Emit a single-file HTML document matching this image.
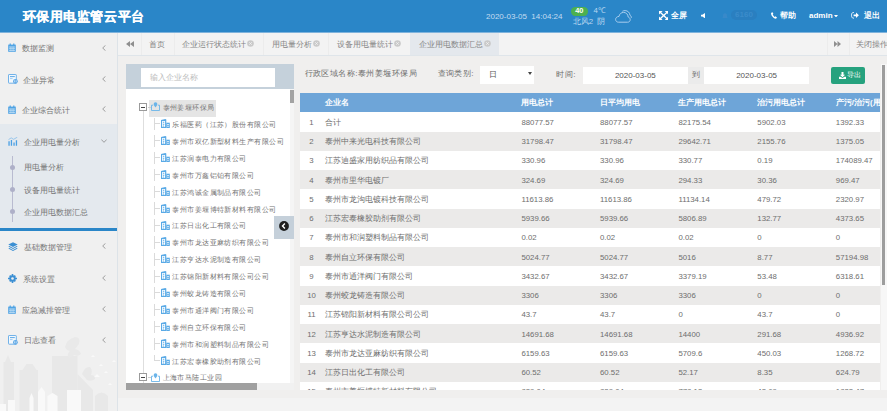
<!DOCTYPE html>
<html><head><meta charset="utf-8">
<style>
*{margin:0;padding:0;box-sizing:border-box}
html,body{width:887px;height:411px;overflow:hidden}
body{position:relative;background:#f0efee;font-family:"Liberation Sans",sans-serif;font-size:7.8px;color:#666}
.a{position:absolute;white-space:nowrap}
#hd{left:0;top:0;width:887px;height:32px;background:#2a86c8}
#title{left:22.5px;top:0.8px;height:32px;line-height:32px;font-size:13px;letter-spacing:0.6px;-webkit-text-stroke:0.2px #fff;font-weight:bold;color:#fff}
.hw{color:#fff;font-weight:bold;font-size:8px}
#sb{left:0;top:33px;width:117px;height:378px;background:#f0f0f0;overflow:hidden}
#sbline{left:117px;top:33px;width:1px;height:378px;background:#dde3e8}
.mi{left:0;width:117px;height:20px;line-height:20px;font-size:7.8px;color:#737373}
.mi .t{position:absolute;left:22px;top:1.5px}
.mi .ch{position:absolute;line-height:0}
.mi .ic{position:absolute;line-height:0}
#act{left:0;top:124px;width:117px;height:104px;background:#e4e9ee}
#bl{left:0;top:228px;width:117px;height:2.6px;background:#2a86c8}
#tb{left:118px;top:33px;width:769px;height:22.5px;background:#f3f3f3;border-bottom:1px solid #dfe5ea}
.sep{top:33px;width:1px;height:22px;background:#ececec}
.tt{top:32.5px;height:23px;line-height:23px;color:#858585}
#tree{left:126px;top:64px;width:168px;height:326px;background:#fff}
#treehd{left:126px;top:64px;width:168px;height:24.6px;background:#c5d1db}
#tinput{left:141px;top:67.6px;width:134px;height:19.4px;background:#fff;color:#bbb;line-height:19.4px;padding-left:9px}
.tn{height:17px;line-height:17px;color:#727272;font-size:7.3px;letter-spacing:0.45px}
#thd{left:300px;top:92.8px;width:580px;height:19.6px;background:#6ea5d8}
.th{top:93.4px;height:19px;line-height:19px;color:#fff;font-weight:bold}
.row{left:300px;width:580px;height:19.25px}
.row.g{background:#ebeae9}
.row.w{background:#fff}
.cell{height:19.3px;line-height:19.3px;color:#6e6e6e;margin-top:0.5px}
.lb{height:19px;line-height:19px;color:#6c6c6c;font-size:8px;letter-spacing:0.45px}
.dt{top:66.5px;height:17.6px;line-height:17.6px;text-align:center;color:#555;font-size:8px}
</style></head><body>
<!-- header -->
<div id="hd" class="a"></div>
<div class="a" style="left:0;top:32px;width:887px;height:1px;background:#7fb3dc"></div>
<div id="title" class="a">环保用电监管云平台</div>
<div class="a" style="left:486px;top:0;height:32px;line-height:33px;font-size:8px;color:#c3dcf1">2020-03-05&nbsp; 14:04:24</div>
<div class="a" style="left:570.5px;top:7px;width:17.5px;height:8.6px;border-radius:4.2px;background:#4cb050;color:#fff;font-weight:bold;font-size:7.4px;line-height:8.4px;text-align:center">40</div>
<div class="a" style="left:593.5px;top:6.3px;height:10px;line-height:10px;font-size:7.8px;color:#b9d7f0">4℃</div>
<div class="a" style="left:572.8px;top:16.8px;height:10px;line-height:10px;font-size:7.8px;color:#b9d7f0">北风2&nbsp; 阴</div>
<svg class="a" style="left:614.5px;top:9.8px" width="17" height="13" viewBox="0 0 17 13"><path d="M3.5 12.2H12.6C14.3 12.2 15.2 11 15.2 9.6C15.2 8.3 14.3 7.3 13.2 7.1C13 4.2 11 2.4 8.6 2.4C6.2 2.4 4.4 4 4 6.4C2.1 6.5 0.6 7.8 0.6 9.4C0.6 11 1.8 12.2 3.5 12.2Z" fill="none" stroke="#a7cdee" stroke-width="1"/><path d="M7.4 1.3C8.2 0.8 9.1 0.6 10.1 0.6C12.8 0.6 14.8 2.6 15 5.3C16 5.8 16.5 6.8 16.3 7.9" fill="none" stroke="#a7cdee" stroke-width="1"/></svg>
<!-- fullscreen icon -->
<svg class="a" style="left:659px;top:11px" width="9.3" height="9" viewBox="0 0 9.3 9"><g fill="#fff"><path d="M0 0h3.6L0 3.6zM9.3 0v3.6L5.7 0zM0 9V5.4L3.6 9zM9.3 9H5.7L9.3 5.4z"/></g><path d="M1.2 1.2L8.1 7.8M8.1 1.2L1.2 7.8" stroke="#fff" stroke-width="1.3"/></svg>
<div class="a hw" style="left:671px;top:0;height:32px;line-height:32px">全屏</div>
<svg class="a" style="left:700.5px;top:12.6px" width="4.2" height="5.4" viewBox="0 0 4.2 5.4"><path d="M0 1.8h1.3L4.2 0v5.4L1.3 3.6H0z" fill="#fff"/></svg>
<svg class="a" style="left:722px;top:12.5px" width="6" height="6" viewBox="0 0 6 6"><path d="M3 0.3c1.4 0 2 1 2 2.2v1.6L5.8 5H0.2L1 4.1V2.5C1 1.3 1.6 0.3 3 0.3z" fill="#3889c9"/></svg><div class="a" style="left:731.3px;top:9.6px;width:25.4px;height:10px;border-radius:5px;background:#2a7fc0;color:#3b8ccb;font-size:8px;font-weight:bold;line-height:10px;text-align:center">6160</div>
<svg class="a" style="left:771px;top:12px" width="6" height="7" viewBox="0 0 6 7"><path d="M1.2 0 L2.4 1.8 L1.7 2.6 C2.1 3.6 2.8 4.4 3.6 4.9 L4.4 4.2 L6 5.5 L5 6.8 C2.4 6.4 0.2 3.8 0 1.2 Z" fill="#fff"/></svg>
<div class="a hw" style="left:779.5px;top:0;height:32px;line-height:32px">帮助</div>
<div class="a hw" style="left:809px;top:0;height:32px;line-height:32px">admin</div>
<svg class="a" style="left:833.8px;top:14.8px" width="4" height="2.5" viewBox="0 0 4 2.5"><path d="M0 0h4L2 2.5z" fill="#fff"/></svg>
<svg class="a" style="left:851px;top:12.3px" width="8" height="6.6" viewBox="0 0 8 6.6"><path d="M3 0.5H2.2C1.2 0.5 0.5 1.6 0.5 3.3S1.2 6.1 2.2 6.1H3" fill="none" stroke="#fff" stroke-width="0.9"/><path d="M2.6 2.4h2.4V0.6L7.9 3.3 5 6V4.2H2.6z" fill="#fff"/></svg>
<div class="a hw" style="left:864px;top:0;height:32px;line-height:32px">退出</div>

<!-- tabs -->
<div id="tb" class="a"></div>
<div class="a" style="left:410px;top:33px;width:89px;height:22px;background:#e4e8ed"></div>
<div class="a sep" style="left:140.5px"></div>
<div class="a sep" style="left:174px"></div>
<div class="a sep" style="left:262.7px"></div>
<div class="a sep" style="left:328px"></div>
<div class="a sep" style="left:826.5px"></div>
<div class="a sep" style="left:848.8px"></div>
<svg class="a" style="left:125.5px;top:41px" width="8" height="6" viewBox="0 0 8 6"><path d="M4 0v6L0 3zM8 0v6L4 3z" fill="#8f8f8f"/></svg>
<svg class="a" style="left:834.4px;top:41px" width="7" height="6" viewBox="0 0 7 6"><path d="M0 0v6l3.5-3zM3.5 0v6L7 3z" fill="#8f8f8f"/></svg>
<div class="a tt" style="left:149.3px">首页</div>
<div class="a tt" style="left:182px">企业运行状态统计</div>
<div class="a" style="left:247.0px;top:40px;line-height:0"><svg width="7" height="7" viewBox="0 0 7 7"><circle cx="3.5" cy="3.5" r="3.3" fill="#cacaca"/><path d="M2.3 2.3l2.4 2.4M4.7 2.3l-2.4 2.4" stroke="#f3f3f3" stroke-width="0.9"/></svg></div>
<div class="a tt" style="left:271.7px">用电量分析</div>
<div class="a" style="left:312.5px;top:40px;line-height:0"><svg width="7" height="7" viewBox="0 0 7 7"><circle cx="3.5" cy="3.5" r="3.3" fill="#cacaca"/><path d="M2.3 2.3l2.4 2.4M4.7 2.3l-2.4 2.4" stroke="#f3f3f3" stroke-width="0.9"/></svg></div>
<div class="a tt" style="left:337px">设备用电量统计</div>
<div class="a" style="left:394.0px;top:40px;line-height:0"><svg width="7" height="7" viewBox="0 0 7 7"><circle cx="3.5" cy="3.5" r="3.3" fill="#cacaca"/><path d="M2.3 2.3l2.4 2.4M4.7 2.3l-2.4 2.4" stroke="#f3f3f3" stroke-width="0.9"/></svg></div>
<div class="a tt" style="left:418.6px">企业用电数据汇总</div>
<div class="a" style="left:483.7px;top:40px;line-height:0"><svg width="7" height="7" viewBox="0 0 7 7"><circle cx="3.5" cy="3.5" r="3.3" fill="#cacaca"/><path d="M2.3 2.3l2.4 2.4M4.7 2.3l-2.4 2.4" stroke="#f3f3f3" stroke-width="0.9"/></svg></div>
<div class="a tt" style="left:856.3px">关闭操作</div>
<!-- sidebar -->
<div id="sb" class="a"></div>
<svg class="a" style="left:0;top:336px" width="117" height="75" viewBox="0 336 117 75">
<g fill="#e8e8e8">
<path d="M3.5 411V362h1.5l3-7 3 7h3V411z"/>
<path d="M19.5 411V370h3l4-6h6l4 6h1.5V411z"/>
<path d="M52 411V356h25.5V411z"/>
<path d="M77.5 411V374l15.5 16V411z"/>
<path d="M95 411V396q6.5-7 13 0V411z"/>
<path d="M65 347q2-8 10-10q6 0 4 7l-4 5q5 1 6 5q-3 3-7 1q-2 3-6 2q-1-4 2-6q-4-1-5-4z" fill="#e9e9e9"/>
<path d="M82 374q3-8 8-7q3 3 1 8q4 0 4 4q-4 3-8 1z"/>
</g>
<g fill="#f9f9f9">
<path d="M0 411V404h6V411z"/>
<path d="M8 411V400h7V411z"/>
<path d="M29.5 411V398l2-5 2 5V411z"/>
<path d="M38 411V392l3.5-5 3.5 5V411z"/>
<path d="M47.5 411V396l5-3 5 3V411z"/>
<path d="M67 411V390h14V411z"/>
<path d="M91 357l2-2 2 2M99 366l2-2 2 2M94 377l3-3 3 3M104 373l2-2 2 2M112 362l2-2 2 2M108 385l2-2 2 2"/>
</g>
</svg>
<div id="act" class="a"></div>
<div id="bl" class="a"></div>
<div id="sbline" class="a"></div>
<div class="a mi" style="top:37.5px"><span class="ic" style="left:8px;top:5.5px"><svg width="8" height="9" viewBox="0 0 8 9"><path d="M0.2 1.6h7.6v7.2H0.2z" fill="#4fa3e4"/><path d="M2.2 0.4v2M5.8 0.4v2" stroke="#4fa3e4" stroke-width="1.2"/><path d="M1 4h6M1 5.7h6M1 7.4h6" stroke="#d7eaf8" stroke-width="0.7"/><path d="M2.9 3.6v4.6M5.1 3.6v4.6" stroke="#d7eaf8" stroke-width="0.5"/></svg></span><span class="t" style="left:22px">数据监测</span><span class="ch" style="left:102px;top:7px"><svg width="4" height="6" viewBox="0 0 4 6"><path d="M3.5 0.3L0.7 3 3.5 5.7" fill="none" stroke="#8a8a8a" stroke-width="0.8"/></svg></span></div>
<div class="a mi" style="top:69.4px"><span class="ic" style="left:8px;top:5.0px"><svg width="10" height="10" viewBox="0 0 10 10"><path d="M1.1 0.5h6.6a0.6 0.6 0 0 1 0.6 0.6v8.1H1.1a0.6 0.6 0 0 1-0.6-0.6V1.1a0.6 0.6 0 0 1 0.6-0.6z" fill="#f3f8fd" stroke="#62aae6" stroke-width="0.9"/><path d="M2 2.6h4.8" stroke="#4d9fe2" stroke-width="0.9"/><path d="M2 4.6h2.6" stroke="#8cc2ee" stroke-width="0.8"/><circle cx="7.4" cy="7.3" r="2.4" fill="#62aae6"/><path d="M6.6 6.3v2M8.2 6.3v2" stroke="#f3f8fd" stroke-width="0.6"/></svg></span><span class="t" style="left:23px">企业异常</span><span class="ch" style="left:102px;top:7px"><svg width="4" height="6" viewBox="0 0 4 6"><path d="M3.5 0.3L0.7 3 3.5 5.7" fill="none" stroke="#8a8a8a" stroke-width="0.8"/></svg></span></div>
<div class="a mi" style="top:99px"><span class="ic" style="left:8px;top:5.5px"><svg width="8" height="9" viewBox="0 0 8 9"><path d="M0.2 1.6h7.6v7.2H0.2z" fill="#4fa3e4"/><path d="M2.2 0.4v2M5.8 0.4v2" stroke="#4fa3e4" stroke-width="1.2"/><path d="M1 4h6M1 5.7h6M1 7.4h6" stroke="#d7eaf8" stroke-width="0.7"/><path d="M2.9 3.6v4.6M5.1 3.6v4.6" stroke="#d7eaf8" stroke-width="0.5"/></svg></span><span class="t" style="left:22px">企业综合统计</span><span class="ch" style="left:102px;top:7px"><svg width="4" height="6" viewBox="0 0 4 6"><path d="M3.5 0.3L0.7 3 3.5 5.7" fill="none" stroke="#8a8a8a" stroke-width="0.8"/></svg></span></div>
<div class="a mi" style="top:131px"><span class="ic" style="left:8px;top:5.5px"><svg width="10" height="9" viewBox="0 0 10 9"><path d="M0.4 4.2h1.3v4.5H0.4zM2.8 3.1h1.3v5.6H2.8zM5.4 5.5h1.3v3.2H5.4zM7.8 3.3h1.3v5.4H7.8z" fill="#4aa0e4"/><path d="M0.5 2.6L3.2 0.9 5.6 2.3 9.3 0.2" fill="none" stroke="#7ab8ec" stroke-width="0.7"/></svg></span><span class="t" style="left:23.5px">企业用电量分析</span><span class="ch" style="left:100.5px;top:8px"><svg width="6" height="4" viewBox="0 0 6 4"><path d="M0.3 0.5L3 3.3 5.7 0.5" fill="none" stroke="#8a8a8a" stroke-width="0.8"/></svg></span></div>
<div class="a mi" style="top:236.3px"><span class="ic" style="left:8px;top:5.5px"><svg width="10" height="9" viewBox="0 0 10 9"><path d="M5 0.3L9.7 2.6 5 4.9 0.3 2.6z" fill="#3b8fd3"/><path d="M1.4 4.1L5 5.9 8.6 4.1 9.7 4.6 5 6.9 0.3 4.6z" fill="#3b8fd3"/><path d="M1.4 6.1L5 7.9 8.6 6.1 9.7 6.6 5 8.9 0.3 6.6z" fill="#3b8fd3"/></svg></span><span class="t" style="left:23.5px">基础数据管理</span><span class="ch" style="left:102px;top:7px"><svg width="4" height="6" viewBox="0 0 4 6"><path d="M3.5 0.3L0.7 3 3.5 5.7" fill="none" stroke="#8a8a8a" stroke-width="0.8"/></svg></span></div>
<div class="a mi" style="top:268.4px"><span class="ic" style="left:8px;top:5.5px"><svg width="9" height="9" viewBox="0 0 9 9"><g fill="#3b8fd3"><circle cx="4.5" cy="4.5" r="3.2"/><path d="M3.7 0h1.6v2h-1.6zM3.7 7h1.6v2h-1.6zM0 3.7h2v1.6H0zM7 3.7h2v1.6H7z"/><path d="M1.1 2.2l1.1-1.1 1.4 1.4-1.1 1.1zM5.4 6.5l1.1-1.1 1.4 1.4-1.1 1.1zM1.1 6.8l1.4-1.4 1.1 1.1-1.4 1.4zM5.4 2.5l1.4-1.4 1.1 1.1-1.4 1.4z"/></g><circle cx="4.5" cy="4.5" r="1.3" fill="#f0f0f0"/></svg></span><span class="t" style="left:23px">系统设置</span><span class="ch" style="left:102px;top:7px"><svg width="4" height="6" viewBox="0 0 4 6"><path d="M3.5 0.3L0.7 3 3.5 5.7" fill="none" stroke="#8a8a8a" stroke-width="0.8"/></svg></span></div>
<div class="a mi" style="top:299px"><span class="ic" style="left:8px;top:5.5px"><svg width="8" height="9" viewBox="0 0 8 9"><path d="M0.2 1.6h7.6v7.2H0.2z" fill="#4fa3e4"/><path d="M2.2 0.4v2M5.8 0.4v2" stroke="#4fa3e4" stroke-width="1.2"/><path d="M1 4h6M1 5.7h6M1 7.4h6" stroke="#d7eaf8" stroke-width="0.7"/><path d="M2.9 3.6v4.6M5.1 3.6v4.6" stroke="#d7eaf8" stroke-width="0.5"/></svg></span><span class="t" style="left:21.5px">应急减排管理</span><span class="ch" style="left:102px;top:7px"><svg width="4" height="6" viewBox="0 0 4 6"><path d="M3.5 0.3L0.7 3 3.5 5.7" fill="none" stroke="#8a8a8a" stroke-width="0.8"/></svg></span></div>
<div class="a mi" style="top:329.7px"><span class="ic" style="left:8px;top:5.0px"><svg width="10" height="10" viewBox="0 0 10 10"><path d="M1.1 0.5h6.6a0.6 0.6 0 0 1 0.6 0.6v8.1H1.1a0.6 0.6 0 0 1-0.6-0.6V1.1a0.6 0.6 0 0 1 0.6-0.6z" fill="#f3f8fd" stroke="#62aae6" stroke-width="0.9"/><path d="M2 2.6h4.8" stroke="#4d9fe2" stroke-width="0.9"/><path d="M2 4.6h2.6" stroke="#8cc2ee" stroke-width="0.8"/><circle cx="7.4" cy="7.3" r="2.4" fill="#62aae6"/><path d="M6.6 6.3v2M8.2 6.3v2" stroke="#f3f8fd" stroke-width="0.6"/></svg></span><span class="t" style="left:23.5px">日志查看</span><span class="ch" style="left:102px;top:7px"><svg width="4" height="6" viewBox="0 0 4 6"><path d="M3.5 0.3L0.7 3 3.5 5.7" fill="none" stroke="#8a8a8a" stroke-width="0.8"/></svg></span></div>
<div class="a" style="left:12px;top:156px;width:1px;height:66px;background:#b9bbd0"></div>
<div class="a" style="left:9.5px;top:164.9px;width:5px;height:5px;border-radius:50%;background:#aeb0c8"></div>
<div class="a mi" style="top:156.7px"><span class="t" style="left:23.5px">用电量分析</span></div>
<div class="a" style="left:9.5px;top:187.4px;width:5px;height:5px;border-radius:50%;background:#aeb0c8"></div>
<div class="a mi" style="top:179.2px"><span class="t" style="left:23.5px">设备用电量统计</span></div>
<div class="a" style="left:9.5px;top:209.2px;width:5px;height:5px;border-radius:50%;background:#aeb0c8"></div>
<div class="a mi" style="top:201px"><span class="t" style="left:23.5px">企业用电数据汇总</span></div>

<!-- content -->
<div class="a" style="left:118px;top:398.4px;width:769px;height:13px;background:#f3f3f3"></div>
<div id="tree" class="a"></div>
<div id="treehd" class="a"></div>
<div id="tinput" class="a">输入企业名称</div>
<div class="a" style="left:143px;top:111px;width:0;height:262px;border-left:1px solid #dedede"></div>
<div class="a" style="left:143px;top:381px;width:0;height:2px;border-left:1px solid #dedede"></div>
<div class="a" style="left:149px;top:100px;width:67px;height:17.2px;background:#e5e5e5"></div>
<div class="a" style="left:139.2px;top:103px;width:8px;height:8px;border:1px solid #9a9a9a;background:#fff"></div><div class="a" style="left:141.2px;top:106.5px;width:4px;height:1px;background:#444"></div><div class="a" style="left:147.5px;top:106.5px;width:3px;height:0;border-top:1px solid #d0d0d0"></div>
<div class="a" style="left:150.8px;top:102.4px;line-height:0"><svg width="9" height="9" viewBox="0 0 9 9"><path d="M0.5 3.2v5.3h8V3.2H6.9M2.1 3.2H0.5" fill="none" stroke="#6ab4e9" stroke-width="0.9"/><path d="M4.5 0.2c1.1 0 1.8 0.8 1.8 1.9 0 1.2-0.9 2.3-1.8 3.3C3.6 4.4 2.7 3.3 2.7 2.1 2.7 1 3.4 0.2 4.5 0.2z" fill="#6ab4e9"/></svg></div>
<div class="a tn" style="left:162.6px;top:99.1px">泰州姜堰环保局</div>
<div class="a" style="left:153.6px;top:117.9px;width:0;height:12.5px;border-left:1px solid #dadada"></div><div class="a" style="left:154.5px;top:123.4px;width:5px;height:0;border-top:1px solid #dadada"></div><div class="a" style="left:161.4px;top:119.1px;line-height:0"><svg width="9" height="9" viewBox="0 0 9 9"><path d="M0 0.9L4.4 0l0.9 0.5V9H0z" fill="#5aaae6"/><path d="M1.1 2h3v5.8h-3z" fill="#fff"/><path d="M1.9 2.8h1.4v1H1.9zM1.9 4.7h1.4v1H1.9zM2.3 6.3h0.6v1.5H2.3z" fill="#5aaae6"/><path d="M5.3 3.7h3.5V9H5.3z" fill="#5aaae6"/><path d="M6.3 5h1.4v0.9H6.3zM6.3 6.8h1.4v0.9H6.3z" fill="#fff"/></svg></div><div class="a tn" style="left:172.3px;top:116.0px">乐福医药（江苏）股份有限公司</div>
<div class="a" style="left:153.6px;top:134.8px;width:0;height:12.5px;border-left:1px solid #dadada"></div><div class="a" style="left:154.5px;top:140.3px;width:5px;height:0;border-top:1px solid #dadada"></div><div class="a" style="left:161.4px;top:136.0px;line-height:0"><svg width="9" height="9" viewBox="0 0 9 9"><path d="M0 0.9L4.4 0l0.9 0.5V9H0z" fill="#5aaae6"/><path d="M1.1 2h3v5.8h-3z" fill="#fff"/><path d="M1.9 2.8h1.4v1H1.9zM1.9 4.7h1.4v1H1.9zM2.3 6.3h0.6v1.5H2.3z" fill="#5aaae6"/><path d="M5.3 3.7h3.5V9H5.3z" fill="#5aaae6"/><path d="M6.3 5h1.4v0.9H6.3zM6.3 6.8h1.4v0.9H6.3z" fill="#fff"/></svg></div><div class="a tn" style="left:172.3px;top:132.9px">泰州市双亿新型材料生产有限公司</div>
<div class="a" style="left:153.6px;top:151.7px;width:0;height:12.5px;border-left:1px solid #dadada"></div><div class="a" style="left:154.5px;top:157.2px;width:5px;height:0;border-top:1px solid #dadada"></div><div class="a" style="left:161.4px;top:152.9px;line-height:0"><svg width="9" height="9" viewBox="0 0 9 9"><path d="M0 0.9L4.4 0l0.9 0.5V9H0z" fill="#5aaae6"/><path d="M1.1 2h3v5.8h-3z" fill="#fff"/><path d="M1.9 2.8h1.4v1H1.9zM1.9 4.7h1.4v1H1.9zM2.3 6.3h0.6v1.5H2.3z" fill="#5aaae6"/><path d="M5.3 3.7h3.5V9H5.3z" fill="#5aaae6"/><path d="M6.3 5h1.4v0.9H6.3zM6.3 6.8h1.4v0.9H6.3z" fill="#fff"/></svg></div><div class="a tn" style="left:172.3px;top:149.8px">江苏润泰电力有限公司</div>
<div class="a" style="left:153.6px;top:168.6px;width:0;height:12.5px;border-left:1px solid #dadada"></div><div class="a" style="left:154.5px;top:174.1px;width:5px;height:0;border-top:1px solid #dadada"></div><div class="a" style="left:161.4px;top:169.8px;line-height:0"><svg width="9" height="9" viewBox="0 0 9 9"><path d="M0 0.9L4.4 0l0.9 0.5V9H0z" fill="#5aaae6"/><path d="M1.1 2h3v5.8h-3z" fill="#fff"/><path d="M1.9 2.8h1.4v1H1.9zM1.9 4.7h1.4v1H1.9zM2.3 6.3h0.6v1.5H2.3z" fill="#5aaae6"/><path d="M5.3 3.7h3.5V9H5.3z" fill="#5aaae6"/><path d="M6.3 5h1.4v0.9H6.3zM6.3 6.8h1.4v0.9H6.3z" fill="#fff"/></svg></div><div class="a tn" style="left:172.3px;top:166.7px">泰州市万鑫铝铂有限公司</div>
<div class="a" style="left:153.6px;top:185.5px;width:0;height:12.5px;border-left:1px solid #dadada"></div><div class="a" style="left:154.5px;top:191.0px;width:5px;height:0;border-top:1px solid #dadada"></div><div class="a" style="left:161.4px;top:186.7px;line-height:0"><svg width="9" height="9" viewBox="0 0 9 9"><path d="M0 0.9L4.4 0l0.9 0.5V9H0z" fill="#5aaae6"/><path d="M1.1 2h3v5.8h-3z" fill="#fff"/><path d="M1.9 2.8h1.4v1H1.9zM1.9 4.7h1.4v1H1.9zM2.3 6.3h0.6v1.5H2.3z" fill="#5aaae6"/><path d="M5.3 3.7h3.5V9H5.3z" fill="#5aaae6"/><path d="M6.3 5h1.4v0.9H6.3zM6.3 6.8h1.4v0.9H6.3z" fill="#fff"/></svg></div><div class="a tn" style="left:172.3px;top:183.6px">江苏鸿诚金属制品有限公司</div>
<div class="a" style="left:153.6px;top:202.4px;width:0;height:12.5px;border-left:1px solid #dadada"></div><div class="a" style="left:154.5px;top:207.9px;width:5px;height:0;border-top:1px solid #dadada"></div><div class="a" style="left:161.4px;top:203.6px;line-height:0"><svg width="9" height="9" viewBox="0 0 9 9"><path d="M0 0.9L4.4 0l0.9 0.5V9H0z" fill="#5aaae6"/><path d="M1.1 2h3v5.8h-3z" fill="#fff"/><path d="M1.9 2.8h1.4v1H1.9zM1.9 4.7h1.4v1H1.9zM2.3 6.3h0.6v1.5H2.3z" fill="#5aaae6"/><path d="M5.3 3.7h3.5V9H5.3z" fill="#5aaae6"/><path d="M6.3 5h1.4v0.9H6.3zM6.3 6.8h1.4v0.9H6.3z" fill="#fff"/></svg></div><div class="a tn" style="left:172.3px;top:200.5px">泰州市姜堰博特新材料有限公司</div>
<div class="a" style="left:153.6px;top:219.3px;width:0;height:12.5px;border-left:1px solid #dadada"></div><div class="a" style="left:154.5px;top:224.8px;width:5px;height:0;border-top:1px solid #dadada"></div><div class="a" style="left:161.4px;top:220.5px;line-height:0"><svg width="9" height="9" viewBox="0 0 9 9"><path d="M0 0.9L4.4 0l0.9 0.5V9H0z" fill="#5aaae6"/><path d="M1.1 2h3v5.8h-3z" fill="#fff"/><path d="M1.9 2.8h1.4v1H1.9zM1.9 4.7h1.4v1H1.9zM2.3 6.3h0.6v1.5H2.3z" fill="#5aaae6"/><path d="M5.3 3.7h3.5V9H5.3z" fill="#5aaae6"/><path d="M6.3 5h1.4v0.9H6.3zM6.3 6.8h1.4v0.9H6.3z" fill="#fff"/></svg></div><div class="a tn" style="left:172.3px;top:217.4px">江苏日出化工有限公司</div>
<div class="a" style="left:153.6px;top:236.2px;width:0;height:12.5px;border-left:1px solid #dadada"></div><div class="a" style="left:154.5px;top:241.7px;width:5px;height:0;border-top:1px solid #dadada"></div><div class="a" style="left:161.4px;top:237.4px;line-height:0"><svg width="9" height="9" viewBox="0 0 9 9"><path d="M0 0.9L4.4 0l0.9 0.5V9H0z" fill="#5aaae6"/><path d="M1.1 2h3v5.8h-3z" fill="#fff"/><path d="M1.9 2.8h1.4v1H1.9zM1.9 4.7h1.4v1H1.9zM2.3 6.3h0.6v1.5H2.3z" fill="#5aaae6"/><path d="M5.3 3.7h3.5V9H5.3z" fill="#5aaae6"/><path d="M6.3 5h1.4v0.9H6.3zM6.3 6.8h1.4v0.9H6.3z" fill="#fff"/></svg></div><div class="a tn" style="left:172.3px;top:234.3px">泰州市龙达亚麻纺织有限公司</div>
<div class="a" style="left:153.6px;top:253.1px;width:0;height:12.5px;border-left:1px solid #dadada"></div><div class="a" style="left:154.5px;top:258.6px;width:5px;height:0;border-top:1px solid #dadada"></div><div class="a" style="left:161.4px;top:254.3px;line-height:0"><svg width="9" height="9" viewBox="0 0 9 9"><path d="M0 0.9L4.4 0l0.9 0.5V9H0z" fill="#5aaae6"/><path d="M1.1 2h3v5.8h-3z" fill="#fff"/><path d="M1.9 2.8h1.4v1H1.9zM1.9 4.7h1.4v1H1.9zM2.3 6.3h0.6v1.5H2.3z" fill="#5aaae6"/><path d="M5.3 3.7h3.5V9H5.3z" fill="#5aaae6"/><path d="M6.3 5h1.4v0.9H6.3zM6.3 6.8h1.4v0.9H6.3z" fill="#fff"/></svg></div><div class="a tn" style="left:172.3px;top:251.2px">江苏亨达水泥制造有限公司</div>
<div class="a" style="left:153.6px;top:270.0px;width:0;height:12.5px;border-left:1px solid #dadada"></div><div class="a" style="left:154.5px;top:275.5px;width:5px;height:0;border-top:1px solid #dadada"></div><div class="a" style="left:161.4px;top:271.2px;line-height:0"><svg width="9" height="9" viewBox="0 0 9 9"><path d="M0 0.9L4.4 0l0.9 0.5V9H0z" fill="#5aaae6"/><path d="M1.1 2h3v5.8h-3z" fill="#fff"/><path d="M1.9 2.8h1.4v1H1.9zM1.9 4.7h1.4v1H1.9zM2.3 6.3h0.6v1.5H2.3z" fill="#5aaae6"/><path d="M5.3 3.7h3.5V9H5.3z" fill="#5aaae6"/><path d="M6.3 5h1.4v0.9H6.3zM6.3 6.8h1.4v0.9H6.3z" fill="#fff"/></svg></div><div class="a tn" style="left:172.3px;top:268.1px">江苏锦阳新材料有限公司公司</div>
<div class="a" style="left:153.6px;top:286.9px;width:0;height:12.5px;border-left:1px solid #dadada"></div><div class="a" style="left:154.5px;top:292.4px;width:5px;height:0;border-top:1px solid #dadada"></div><div class="a" style="left:161.4px;top:288.1px;line-height:0"><svg width="9" height="9" viewBox="0 0 9 9"><path d="M0 0.9L4.4 0l0.9 0.5V9H0z" fill="#5aaae6"/><path d="M1.1 2h3v5.8h-3z" fill="#fff"/><path d="M1.9 2.8h1.4v1H1.9zM1.9 4.7h1.4v1H1.9zM2.3 6.3h0.6v1.5H2.3z" fill="#5aaae6"/><path d="M5.3 3.7h3.5V9H5.3z" fill="#5aaae6"/><path d="M6.3 5h1.4v0.9H6.3zM6.3 6.8h1.4v0.9H6.3z" fill="#fff"/></svg></div><div class="a tn" style="left:172.3px;top:285.0px">泰州蛟龙铸造有限公司</div>
<div class="a" style="left:153.6px;top:303.8px;width:0;height:12.5px;border-left:1px solid #dadada"></div><div class="a" style="left:154.5px;top:309.3px;width:5px;height:0;border-top:1px solid #dadada"></div><div class="a" style="left:161.4px;top:305.0px;line-height:0"><svg width="9" height="9" viewBox="0 0 9 9"><path d="M0 0.9L4.4 0l0.9 0.5V9H0z" fill="#5aaae6"/><path d="M1.1 2h3v5.8h-3z" fill="#fff"/><path d="M1.9 2.8h1.4v1H1.9zM1.9 4.7h1.4v1H1.9zM2.3 6.3h0.6v1.5H2.3z" fill="#5aaae6"/><path d="M5.3 3.7h3.5V9H5.3z" fill="#5aaae6"/><path d="M6.3 5h1.4v0.9H6.3zM6.3 6.8h1.4v0.9H6.3z" fill="#fff"/></svg></div><div class="a tn" style="left:172.3px;top:301.9px">泰州市通洋阀门有限公司</div>
<div class="a" style="left:153.6px;top:320.7px;width:0;height:12.5px;border-left:1px solid #dadada"></div><div class="a" style="left:154.5px;top:326.2px;width:5px;height:0;border-top:1px solid #dadada"></div><div class="a" style="left:161.4px;top:321.9px;line-height:0"><svg width="9" height="9" viewBox="0 0 9 9"><path d="M0 0.9L4.4 0l0.9 0.5V9H0z" fill="#5aaae6"/><path d="M1.1 2h3v5.8h-3z" fill="#fff"/><path d="M1.9 2.8h1.4v1H1.9zM1.9 4.7h1.4v1H1.9zM2.3 6.3h0.6v1.5H2.3z" fill="#5aaae6"/><path d="M5.3 3.7h3.5V9H5.3z" fill="#5aaae6"/><path d="M6.3 5h1.4v0.9H6.3zM6.3 6.8h1.4v0.9H6.3z" fill="#fff"/></svg></div><div class="a tn" style="left:172.3px;top:318.8px">泰州自立环保有限公司</div>
<div class="a" style="left:153.6px;top:337.6px;width:0;height:12.5px;border-left:1px solid #dadada"></div><div class="a" style="left:154.5px;top:343.1px;width:5px;height:0;border-top:1px solid #dadada"></div><div class="a" style="left:161.4px;top:338.8px;line-height:0"><svg width="9" height="9" viewBox="0 0 9 9"><path d="M0 0.9L4.4 0l0.9 0.5V9H0z" fill="#5aaae6"/><path d="M1.1 2h3v5.8h-3z" fill="#fff"/><path d="M1.9 2.8h1.4v1H1.9zM1.9 4.7h1.4v1H1.9zM2.3 6.3h0.6v1.5H2.3z" fill="#5aaae6"/><path d="M5.3 3.7h3.5V9H5.3z" fill="#5aaae6"/><path d="M6.3 5h1.4v0.9H6.3zM6.3 6.8h1.4v0.9H6.3z" fill="#fff"/></svg></div><div class="a tn" style="left:172.3px;top:335.7px">泰州市和润塑料制品有限公司</div>
<div class="a" style="left:153.6px;top:354.5px;width:0;height:6.5px;border-left:1px solid #dadada"></div><div class="a" style="left:154.5px;top:360.0px;width:5px;height:0;border-top:1px solid #dadada"></div><div class="a" style="left:161.4px;top:355.7px;line-height:0"><svg width="9" height="9" viewBox="0 0 9 9"><path d="M0 0.9L4.4 0l0.9 0.5V9H0z" fill="#5aaae6"/><path d="M1.1 2h3v5.8h-3z" fill="#fff"/><path d="M1.9 2.8h1.4v1H1.9zM1.9 4.7h1.4v1H1.9zM2.3 6.3h0.6v1.5H2.3z" fill="#5aaae6"/><path d="M5.3 3.7h3.5V9H5.3z" fill="#5aaae6"/><path d="M6.3 5h1.4v0.9H6.3zM6.3 6.8h1.4v0.9H6.3z" fill="#fff"/></svg></div><div class="a tn" style="left:172.3px;top:352.6px">江苏宏泰橡胶助剂有限公司</div>
<div class="a" style="left:139.2px;top:373.2px;width:8px;height:8px;border:1px solid #9a9a9a;background:#fff"></div><div class="a" style="left:141.2px;top:376.7px;width:4px;height:1px;background:#444"></div><div class="a" style="left:147.5px;top:376.7px;width:3px;height:0;border-top:1px solid #d0d0d0"></div>
<div class="a" style="left:150.8px;top:372.59999999999997px;line-height:0"><svg width="9" height="9" viewBox="0 0 9 9"><path d="M0.5 3.2v5.3h8V3.2H6.9M2.1 3.2H0.5" fill="none" stroke="#6ab4e9" stroke-width="0.9"/><path d="M4.5 0.2c1.1 0 1.8 0.8 1.8 1.9 0 1.2-0.9 2.3-1.8 3.3C3.6 4.4 2.7 3.3 2.7 2.1 2.7 1 3.4 0.2 4.5 0.2z" fill="#6ab4e9"/></svg></div>
<div class="a tn" style="left:162.6px;top:369.3px">上海市马陆工业园</div>
<div class="a" style="left:290.2px;top:88.6px;width:3.4px;height:294px;background:#f5f5f5"></div>
<div class="a" style="left:290.2px;top:89.7px;width:3.4px;height:13.3px;background:#a3a3a3"></div>
<div class="a" style="left:126px;top:382.7px;width:167.6px;height:7.3px;background:#f1f1f1"></div>
<div class="a" style="left:126.3px;top:382.7px;width:131.2px;height:7.3px;background:#a0a0a0"></div>
<div class="a" style="left:273.5px;top:216.4px;width:20.1px;height:22.3px;background:#c5d0da"></div>
<svg class="a" style="left:278.5px;top:221px" width="10" height="10" viewBox="0 0 10 10"><circle cx="5" cy="5" r="4.9" fill="#1e1e1e"/><path d="M5.9 2.5L3.5 5l2.4 2.5" fill="none" stroke="#fff" stroke-width="1.4"/></svg>
<!-- filter -->
<div class="a lb" style="left:304.5px;top:64px">行政区域名称:泰州姜堰环保局</div>
<div class="a lb" style="left:437.5px;top:64px">查询类别:</div>
<div class="a" style="left:479.5px;top:65.8px;width:54.3px;height:17.8px;background:#fff"></div>
<div class="a lb" style="left:489px;top:65px;color:#555">日</div>
<svg class="a" style="left:527.5px;top:72px" width="4" height="3" viewBox="0 0 4 3"><path d="M0 0h4L2 3z" fill="#444"/></svg>
<div class="a lb" style="left:556.4px;top:65px">时间:</div>
<div class="a" style="left:582.7px;top:66.8px;width:105.3px;height:16.8px;background:#fff"></div>
<div class="a" style="left:688px;top:66.8px;width:16px;height:16.8px;background:#ebebeb"></div>
<div class="a lb" style="left:692px;top:65px">到</div>
<div class="a" style="left:704px;top:66.8px;width:105.2px;height:16.8px;background:#fff"></div>
<div class="a dt" style="left:582.7px;width:105.3px">2020-03-05</div>
<div class="a dt" style="left:704px;width:105.2px">2020-03-05</div>
<div class="a" style="left:831.4px;top:67px;width:34px;height:16.8px;background:#26a27e;border-radius:2px"></div>
<svg class="a" style="left:838.5px;top:71.5px" width="7" height="7" viewBox="0 0 7 7"><path d="M2.5 0h2v2.8h1.6L3.5 5.2 0.9 2.8h1.6z" fill="#fff"/><path d="M0 4.8h1.6l1.9 1.3 1.9-1.3H7V7H0z" fill="#fff"/></svg>
<div class="a" style="left:847px;top:66px;height:17px;line-height:17px;color:#fff;font-size:7.3px">导出</div>
<div class="a" style="left:881px;top:64px;width:6px;height:326px;background:#f7f7f7"></div>
<div class="a" style="left:882px;top:64.6px;width:3px;height:220px;background:#9d9d9d"></div>
<div id="thd" class="a"></div>
<div class="a" style="left:0;top:0;width:880px;height:120px;overflow:hidden">
<div class="a th" style="left:324.5px">企业名</div>
<div class="a th" style="left:521.4px">用电总计</div>
<div class="a th" style="left:600px">日平均用电</div>
<div class="a th" style="left:678.4px">生产用电总计</div>
<div class="a th" style="left:757.3px">治污用电总计</div>
<div class="a th" style="left:835.8px">产污/治污(用电总计)</div>
</div>
<div class="a" style="left:300px;top:112.4px;width:580px;height:278px;overflow:hidden">
<div class="a row w" style="left:0;top:0.00px"></div><div class="a cell" style="left:0;width:23px;text-align:center;top:0.00px">1</div><div class="a cell" style="left:24.5px;top:0.00px">合计</div><div class="a cell" style="left:221.4px;top:0.00px">88077.57</div><div class="a cell" style="left:300px;top:0.00px">88077.57</div><div class="a cell" style="left:378.4px;top:0.00px">82175.54</div><div class="a cell" style="left:457.3px;top:0.00px">5902.03</div><div class="a cell" style="left:535.8px;top:0.00px">1392.33</div>
<div class="a row g" style="left:0;top:19.25px"></div><div class="a cell" style="left:0;width:23px;text-align:center;top:19.25px">2</div><div class="a cell" style="left:24.5px;top:19.25px">泰州中来光电科技有限公司</div><div class="a cell" style="left:221.4px;top:19.25px">31798.47</div><div class="a cell" style="left:300px;top:19.25px">31798.47</div><div class="a cell" style="left:378.4px;top:19.25px">29642.71</div><div class="a cell" style="left:457.3px;top:19.25px">2155.76</div><div class="a cell" style="left:535.8px;top:19.25px">1375.05</div>
<div class="a row w" style="left:0;top:38.50px"></div><div class="a cell" style="left:0;width:23px;text-align:center;top:38.50px">3</div><div class="a cell" style="left:24.5px;top:38.50px">江苏迪盛家用纺织品有限公司</div><div class="a cell" style="left:221.4px;top:38.50px">330.96</div><div class="a cell" style="left:300px;top:38.50px">330.96</div><div class="a cell" style="left:378.4px;top:38.50px">330.77</div><div class="a cell" style="left:457.3px;top:38.50px">0.19</div><div class="a cell" style="left:535.8px;top:38.50px">174089.47</div>
<div class="a row g" style="left:0;top:57.75px"></div><div class="a cell" style="left:0;width:23px;text-align:center;top:57.75px">4</div><div class="a cell" style="left:24.5px;top:57.75px">泰州市里华电镀厂</div><div class="a cell" style="left:221.4px;top:57.75px">324.69</div><div class="a cell" style="left:300px;top:57.75px">324.69</div><div class="a cell" style="left:378.4px;top:57.75px">294.33</div><div class="a cell" style="left:457.3px;top:57.75px">30.36</div><div class="a cell" style="left:535.8px;top:57.75px">969.47</div>
<div class="a row w" style="left:0;top:77.00px"></div><div class="a cell" style="left:0;width:23px;text-align:center;top:77.00px">5</div><div class="a cell" style="left:24.5px;top:77.00px">泰州市龙沟电镀科技有限公司</div><div class="a cell" style="left:221.4px;top:77.00px">11613.86</div><div class="a cell" style="left:300px;top:77.00px">11613.86</div><div class="a cell" style="left:378.4px;top:77.00px">11134.14</div><div class="a cell" style="left:457.3px;top:77.00px">479.72</div><div class="a cell" style="left:535.8px;top:77.00px">2320.97</div>
<div class="a row g" style="left:0;top:96.25px"></div><div class="a cell" style="left:0;width:23px;text-align:center;top:96.25px">6</div><div class="a cell" style="left:24.5px;top:96.25px">江苏宏泰橡胶助剂有限公司</div><div class="a cell" style="left:221.4px;top:96.25px">5939.66</div><div class="a cell" style="left:300px;top:96.25px">5939.66</div><div class="a cell" style="left:378.4px;top:96.25px">5806.89</div><div class="a cell" style="left:457.3px;top:96.25px">132.77</div><div class="a cell" style="left:535.8px;top:96.25px">4373.65</div>
<div class="a row w" style="left:0;top:115.50px"></div><div class="a cell" style="left:0;width:23px;text-align:center;top:115.50px">7</div><div class="a cell" style="left:24.5px;top:115.50px">泰州市和润塑料制品有限公司</div><div class="a cell" style="left:221.4px;top:115.50px">0.02</div><div class="a cell" style="left:300px;top:115.50px">0.02</div><div class="a cell" style="left:378.4px;top:115.50px">0.02</div><div class="a cell" style="left:457.3px;top:115.50px">0</div><div class="a cell" style="left:535.8px;top:115.50px">0</div>
<div class="a row g" style="left:0;top:134.75px"></div><div class="a cell" style="left:0;width:23px;text-align:center;top:134.75px">8</div><div class="a cell" style="left:24.5px;top:134.75px">泰州自立环保有限公司</div><div class="a cell" style="left:221.4px;top:134.75px">5024.77</div><div class="a cell" style="left:300px;top:134.75px">5024.77</div><div class="a cell" style="left:378.4px;top:134.75px">5016</div><div class="a cell" style="left:457.3px;top:134.75px">8.77</div><div class="a cell" style="left:535.8px;top:134.75px">57194.98</div>
<div class="a row w" style="left:0;top:154.00px"></div><div class="a cell" style="left:0;width:23px;text-align:center;top:154.00px">9</div><div class="a cell" style="left:24.5px;top:154.00px">泰州市通洋阀门有限公司</div><div class="a cell" style="left:221.4px;top:154.00px">3432.67</div><div class="a cell" style="left:300px;top:154.00px">3432.67</div><div class="a cell" style="left:378.4px;top:154.00px">3379.19</div><div class="a cell" style="left:457.3px;top:154.00px">53.48</div><div class="a cell" style="left:535.8px;top:154.00px">6318.61</div>
<div class="a row g" style="left:0;top:173.25px"></div><div class="a cell" style="left:0;width:23px;text-align:center;top:173.25px">10</div><div class="a cell" style="left:24.5px;top:173.25px">泰州蛟龙铸造有限公司</div><div class="a cell" style="left:221.4px;top:173.25px">3306</div><div class="a cell" style="left:300px;top:173.25px">3306</div><div class="a cell" style="left:378.4px;top:173.25px">3306</div><div class="a cell" style="left:457.3px;top:173.25px">0</div><div class="a cell" style="left:535.8px;top:173.25px">0</div>
<div class="a row w" style="left:0;top:192.50px"></div><div class="a cell" style="left:0;width:23px;text-align:center;top:192.50px">11</div><div class="a cell" style="left:24.5px;top:192.50px">江苏锦阳新材料有限公司公司</div><div class="a cell" style="left:221.4px;top:192.50px">43.7</div><div class="a cell" style="left:300px;top:192.50px">43.7</div><div class="a cell" style="left:378.4px;top:192.50px">0</div><div class="a cell" style="left:457.3px;top:192.50px">43.7</div><div class="a cell" style="left:535.8px;top:192.50px">0</div>
<div class="a row g" style="left:0;top:211.75px"></div><div class="a cell" style="left:0;width:23px;text-align:center;top:211.75px">12</div><div class="a cell" style="left:24.5px;top:211.75px">江苏亨达水泥制造有限公司</div><div class="a cell" style="left:221.4px;top:211.75px">14691.68</div><div class="a cell" style="left:300px;top:211.75px">14691.68</div><div class="a cell" style="left:378.4px;top:211.75px">14400</div><div class="a cell" style="left:457.3px;top:211.75px">291.68</div><div class="a cell" style="left:535.8px;top:211.75px">4936.92</div>
<div class="a row w" style="left:0;top:231.00px"></div><div class="a cell" style="left:0;width:23px;text-align:center;top:231.00px">13</div><div class="a cell" style="left:24.5px;top:231.00px">泰州市龙达亚麻纺织有限公司</div><div class="a cell" style="left:221.4px;top:231.00px">6159.63</div><div class="a cell" style="left:300px;top:231.00px">6159.63</div><div class="a cell" style="left:378.4px;top:231.00px">5709.6</div><div class="a cell" style="left:457.3px;top:231.00px">450.03</div><div class="a cell" style="left:535.8px;top:231.00px">1268.72</div>
<div class="a row g" style="left:0;top:250.25px"></div><div class="a cell" style="left:0;width:23px;text-align:center;top:250.25px">14</div><div class="a cell" style="left:24.5px;top:250.25px">江苏日出化工有限公司</div><div class="a cell" style="left:221.4px;top:250.25px">60.52</div><div class="a cell" style="left:300px;top:250.25px">60.52</div><div class="a cell" style="left:378.4px;top:250.25px">52.17</div><div class="a cell" style="left:457.3px;top:250.25px">8.35</div><div class="a cell" style="left:535.8px;top:250.25px">624.79</div>
<div class="a row w" style="left:0;top:269.50px"></div><div class="a cell" style="left:0;width:23px;text-align:center;top:269.50px">15</div><div class="a cell" style="left:24.5px;top:269.50px">泰州市姜堰博特新材料有限公司</div><div class="a cell" style="left:221.4px;top:269.50px">839.04</div><div class="a cell" style="left:300px;top:269.50px">839.04</div><div class="a cell" style="left:378.4px;top:269.50px">778.13</div><div class="a cell" style="left:457.3px;top:269.50px">43.69</div><div class="a cell" style="left:535.8px;top:269.50px">1823.47</div>
</div>
</body></html>
